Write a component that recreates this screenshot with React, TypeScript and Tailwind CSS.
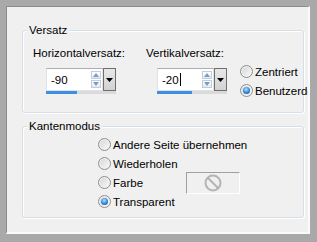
import type { ReactNode } from "react";

function RadioDot({ checked }: { checked?: boolean }) {
  return (
    <span className="flex h-[13px] w-[13px] shrink-0 items-center justify-center rounded-full border border-[#8e8e8e] bg-[linear-gradient(135deg,#d4d4d4,#fbfbfb)] shadow-[inset_0_0_0_1px_#f2f2f2]">
      {checked && (
        <span className="h-[7px] w-[7px] rounded-full bg-[radial-gradient(circle_at_45%_35%,#b2e2ff_0%,#2f86d6_55%,#15437f_100%)]" />
      )}
    </span>
  );
}

function Option({ label, checked }: { label: string; checked?: boolean }) {
  return (
    <div className="flex h-[19px] items-center gap-[2px] whitespace-nowrap">
      <RadioDot checked={checked} />
      <span>{label}</span>
    </div>
  );
}

function Gruppe({
  titel,
  className,
  children,
}: {
  titel: string;
  className: string;
  children: ReactNode;
}) {
  return (
    <div
      className={`relative w-[282px] shrink-0 rounded-[3px] border border-[#d5dfe5] shadow-[inset_1px_1px_0_#fff,1px_1px_0_#fff] ${className}`}
    >
      <span className="absolute -top-[8px] left-[4px] bg-[#f0f0f0] px-[2px] leading-[14px]">
        {titel}
      </span>
      {children}
    </div>
  );
}

function SpinFeld({ wert, fuellung, cursor }: { wert: string; fuellung: string; cursor?: boolean }) {
  return (
    <div className="flex h-[26px] w-[70px] flex-col">
      <div className="flex h-[23px]">
        <div className="flex flex-1 items-center border border-[#e2e3ea] border-t-[#abadb3] bg-white pl-[4px] pr-[1px]">
          <span className="flex-1 leading-[14px]">
            {wert}
            {cursor && <span className="ml-[1px] inline-block h-[13px] w-px bg-black align-[-2px]" />}
          </span>
          <div className="flex flex-col gap-px">
            <span className="flex h-[8px] w-[10px] items-center justify-center border border-[#c3cdd8] bg-[linear-gradient(#ffffff,#e3eaf2)]">
              <svg width="6" height="4" viewBox="0 0 6 4">
                <polygon points="0,4 3,0 6,4" fill="#7b9bc6" />
              </svg>
            </span>
            <span className="flex h-[8px] w-[10px] items-center justify-center border border-[#c3cdd8] bg-[linear-gradient(#ffffff,#e3eaf2)]">
              <svg width="6" height="4" viewBox="0 0 6 4">
                <polygon points="0,0 6,0 3,4" fill="#7b9bc6" />
              </svg>
            </span>
          </div>
        </div>
        <div className="flex w-[13px] items-center justify-center border border-[#6f6f6f] bg-[linear-gradient(#e8e8e8,#d2d2d2)]">
          <svg width="7" height="4" viewBox="0 0 7 4">
            <polygon points="0,0 7,0 3.5,4" fill="#000" />
          </svg>
        </div>
      </div>
      <div className="h-[3px] bg-[#dadada]">
        <div className={`h-full bg-[#3d8fe2] ${fuellung}`} />
      </div>
    </div>
  );
}

export default function App() {
  return (
    <div className="h-[242px] w-[317px] bg-[#a9a9a9] pb-[8px] pl-[6px] pr-[7px] pt-[6px] font-['Liberation_Sans',Arial,sans-serif] text-[11.5px] leading-[14px] text-black">
      <div className="flex h-full flex-col overflow-hidden border-b-2 border-l border-r-2 border-t border-b-[#fafafa] border-l-[#8c8c8c] border-r-[#fafafa] border-t-[#8c8c8c] bg-[#f0f0f0] pl-[15px] pt-[23px]">
        <Gruppe titel="Versatz" className="flex h-[83px] pl-[10px] pt-[15px]">
          <div className="flex w-[113px] shrink-0 flex-col">
            <span className="whitespace-nowrap">Horizontalversatz:</span>
            <div className="ml-[13px] mt-[8px]">
              <SpinFeld wert="-90" fuellung="w-[31px]" />
            </div>
          </div>
          <div className="flex w-[94px] shrink-0 flex-col">
            <span className="whitespace-nowrap">Vertikalversatz:</span>
            <div className="ml-[11px] mt-[8px]">
              <SpinFeld wert="-20" fuellung="w-[35px]" cursor />
            </div>
          </div>
          <div className="flex shrink-0 flex-col pt-[15px]">
            <div className="h-[20px] pt-[1px]">
              <Option label="Zentriert" />
            </div>
            <Option label="Benutzerdefiniert" checked />
          </div>
        </Gruppe>
        <Gruppe titel="Kantenmodus" className="mt-[13px] h-[92px] pl-[75px] pt-[8px]">
          <Option label="Andere Seite übernehmen" />
          <Option label="Wiederholen" />
          <div className="flex h-[19px] items-center whitespace-nowrap">
            <RadioDot />
            <span className="ml-[2px] w-[73px]">Farbe</span>
            <div className="flex h-[22px] w-[54px] items-center justify-center border border-b-white border-l-[#a0a0a0] border-r-white border-t-[#a0a0a0] bg-[#f0f0f0]">
              <svg width="18" height="18" viewBox="0 0 18 18">
                <circle cx="9" cy="9" r="7.5" fill="none" stroke="#b4b4b4" strokeWidth="2" />
                <line x1="4" y1="4" x2="14" y2="14" stroke="#b4b4b4" strokeWidth="2" />
              </svg>
            </div>
          </div>
          <Option label="Transparent" checked />
        </Gruppe>
      </div>
    </div>
  );
}
